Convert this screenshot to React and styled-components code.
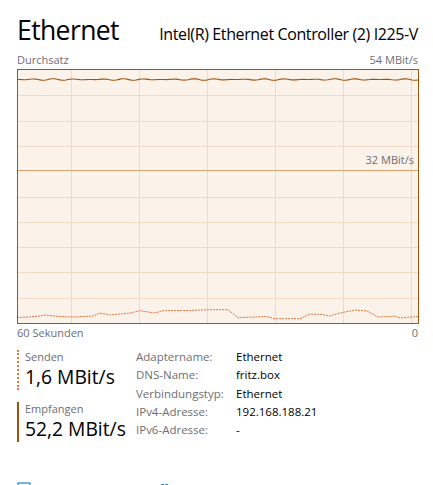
import React from "react";
import styled, { createGlobalStyle } from "styled-components";

const GlobalStyle = createGlobalStyle`
  html, body {
    margin: 0;
    padding: 0;
    background: #ffffff;
    overflow: hidden;
  }
  body {
    font-family: "Segoe UI", "Open Sans", "Noto Sans", sans-serif;
    color: #000;
  }
`;

const Page = styled.div`
  width: 433px;
  height: 485px;
  padding: 14px 15px 0 17px;
  box-sizing: border-box;
  display: flex;
  flex-direction: column;
  overflow: hidden;
`;

const Header = styled.div`
  display: flex;
  align-items: baseline;
  justify-content: space-between;
  height: 32px;
`;

const Title = styled.div`
  font-size: 26.5px;
  line-height: 32px;
  letter-spacing: -0.6px;
`;

const Subtitle = styled.div`
  font-size: 16px;
  line-height: 20px;
  letter-spacing: -0.38px;
`;

const AxisRow = styled.div`
  display: flex;
  justify-content: space-between;
  font-size: 11px;
  line-height: 14px;
  color: #6e6e74;
  margin-top: ${(p) => p.$mt || 0}px;
`;

const Chart = styled.div`
  position: relative;
  margin-top: 2px;
  width: 400px;
  height: 253px;
  border: 1px solid #a4530f;
  background: #fbf2ea;
`;

const ScaleMark = styled.span`
  position: absolute;
  right: 4px;
  top: 83px;
  font-size: 11px;
  line-height: 14px;
  color: #6e6e74;
`;

const Bottom = styled.div`
  display: flex;
  margin-top: 10px;
`;

const Stats = styled.div`
  display: flex;
  flex-direction: column;
  gap: 12px;
  width: 119px;
`;

const Stat = styled.div`
  height: 40px;
  padding-left: 6px;
  border-left: 2px ${(p) => (p.$dotted ? "dotted #e8733a" : "solid #a4530f")};
`;

const StatLabel = styled.div`
  font-size: 11px;
  line-height: 14px;
  color: #6e6e74;
`;

const StatValue = styled.div`
  font-size: 19.3px;
  line-height: 25px;
  white-space: nowrap;
`;

const Props = styled.div`
  display: grid;
  grid-template-columns: 100px auto;
  grid-auto-rows: 18.3px;
  align-items: center;
  font-size: 11.5px;
  margin-top: -2.5px;
`;

const PropLabel = styled.div`
  color: #6e6e74;
`;

const PropValue = styled.div`
  color: #000;
`;

const Link = styled.div`
  display: flex;
  align-items: flex-start;
  gap: 8px;
  margin-top: 40px;
  color: #0066cc;
  font-size: 12px;
  line-height: 16px;
  white-space: nowrap;
`;

const W = 400;
const H = 253;

const sendPts = [
  [17, 317.6], [28, 317], [40, 316], [45, 315], [60, 316.5], [73, 317], [93, 316],
  [100, 313], [110, 315], [130, 313], [140, 310.7], [155, 313], [163, 310.7],
  [190, 310.5], [200, 310], [210, 309.7], [228, 309.7], [238, 317.6], [255, 317],
  [265, 316.5], [268, 317], [275, 318.7], [300, 318.7], [310, 314], [322, 314.5],
  [330, 316], [340, 313], [355, 310], [367, 311], [378, 317], [390, 316.5],
  [395, 316], [400, 318], [410, 317], [418, 316.6],
].map(([x, y]) => `${x - 18},${y - 70}`);

function receivePath() {
  let d = "M0,9.5";
  for (let x = 0; x <= W; x += 2) {
    const y = 9.5 + 0.8 * Math.sin(x / 3.2) * Math.sin(x / 23);
    d += ` L${x},${y.toFixed(2)}`;
  }
  return d;
}

function Graph() {
  const vx = [53, 121, 189, 257, 325, 393];
  const hy = [1, 2, 3, 5, 6, 7, 8, 9].map((i) => (H / 10) * i);
  return (
    <svg width={W} height={H} style={{ display: "block" }}>
      {vx.map((x) => (
        <line key={x} x1={x + 0.5} x2={x + 0.5} y1={0} y2={H} stroke="#f0dac6" />
      ))}
      {hy.map((y) => (
        <line key={y} x1={0} x2={W} y1={Math.round(y) + 0.5} y2={Math.round(y) + 0.5} stroke="#f0dac6" />
      ))}
      <line x1={0} x2={W} y1={100.5} y2={100.5} stroke="#dca170" />
      <path d={receivePath()} fill="none" stroke="#a4530f" strokeWidth="1.1" />
      <polyline
        points={sendPts.join(" ")}
        fill="none"
        stroke="#e8733a"
        strokeWidth="1"
        strokeDasharray="2 1"
      />
    </svg>
  );
}

const rows = [
  ["Adaptername:", "Ethernet"],
  ["DNS-Name:", "fritz.box"],
  ["Verbindungstyp:", "Ethernet"],
  ["IPv4-Adresse:", "192.168.188.21"],
  ["IPv6-Adresse:", "-"],
];

export default function App() {
  return (
    <>
      <GlobalStyle />
      <Page>
        <Header>
          <Title>Ethernet</Title>
          <Subtitle>Intel(R) Ethernet Controller (2) I225-V</Subtitle>
        </Header>
        <AxisRow $mt={7}>
          <span>Durchsatz</span>
          <span>54 MBit/s</span>
        </AxisRow>
        <Chart>
          <Graph />
          <ScaleMark>32 MBit/s</ScaleMark>
        </Chart>
        <AxisRow $mt={2}>
          <span>60 Sekunden</span>
          <span>0</span>
        </AxisRow>
        <Bottom>
          <Stats>
            <Stat $dotted>
              <StatLabel>Senden</StatLabel>
              <StatValue>1,6 MBit/s</StatValue>
            </Stat>
            <Stat>
              <StatLabel>Empfangen</StatLabel>
              <StatValue>52,2 MBit/s</StatValue>
            </Stat>
          </Stats>
          <Props>
            {rows.map(([k, v]) => (
              <React.Fragment key={k}>
                <PropLabel>{k}</PropLabel>
                <PropValue>{v}</PropValue>
              </React.Fragment>
            ))}
          </Props>
        </Bottom>
        <Link>
          <svg width="14" height="14" viewBox="0 0 14 14">
            <rect x="1" y="1" width="12" height="12" fill="none" stroke="#0066cc" />
            <polyline points="3,10 6,6 8,8 11,4" fill="none" stroke="#0066cc" />
          </svg>
          <span>Ressourcenmonitor öffnen</span>
        </Link>
      </Page>
    </>
  );
}
